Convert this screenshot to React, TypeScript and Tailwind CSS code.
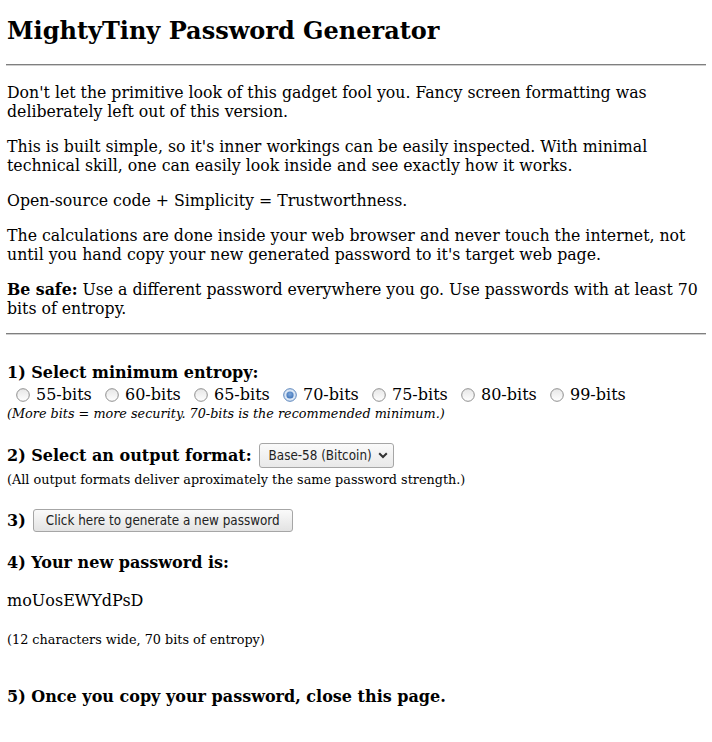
import React, { useState } from "react";

const serif = "font-['DejaVu_Serif',serif]";
const cond = "font-['DejaVu_Serif',serif] font-stretch-semi-condensed";
const sans = "font-['DejaVu_Sans',sans-serif] font-stretch-semi-condensed";

const options = ["55", "60", "65", "70", "75", "80", "99"];

function Radio({ checked }: { checked: boolean }) {
    if (checked) {
        return (
            <svg width="14" height="14" viewBox="0 0 14 14" className="shrink-0">
                <defs>
                    <radialGradient id="dot" cx="50%" cy="40%" r="60%">
                        <stop offset="0%" stopColor="#7fa9dc" />
                        <stop offset="100%" stopColor="#3f73b8" />
                    </radialGradient>
                </defs>
                <circle cx="7" cy="7" r="6.3" fill="#dbe7f5" stroke="#5a84bb" strokeWidth="1" />
                <circle cx="7" cy="7" r="3.6" fill="url(#dot)" />
            </svg>
        );
    }
    return (
        <svg width="14" height="14" viewBox="0 0 14 14" className="shrink-0">
            <defs>
                <linearGradient id="off" x1="0" y1="0" x2="0" y2="1">
                    <stop offset="0%" stopColor="#e6e6e6" />
                    <stop offset="100%" stopColor="#ffffff" />
                </linearGradient>
            </defs>
            <circle cx="7" cy="7" r="6.3" fill="url(#off)" stroke="#8e8e8e" strokeWidth="1" />
        </svg>
    );
}

function Rule() {
    return <div className="-mx-[1px] h-[2px] border-t border-b border-t-[#7f7f7f] border-b-[#cfcfcf]" />;
}

export default function App() {
    const [bits, setBits] = useState("70");

    return (
        <div className={`min-h-screen bg-white text-black px-[7px] pt-[17px] ${serif}`}>
            <h1 className="text-[24px] leading-[28px] font-bold">MightyTiny Password Generator</h1>

            <div className="mt-[19px]">
                <Rule />
            </div>

            <div className={`text-[17.5px] leading-[19px] ${cond}`}>
                <p className="mt-[17px]">
                    Don't let the primitive look of this gadget fool you. Fancy screen formatting was deliberately left
                    out of this version.
                </p>
                <p className="mt-4">
                    This is built simple, so it's inner workings can be easily inspected. With minimal technical skill,
                    one can easily look inside and see exactly how it works.
                </p>
                <p className="mt-4">Open-source code + Simplicity = Trustworthness.</p>
                <p className="mt-4">
                    The calculations are done inside your web browser and never touch the internet, not until you hand
                    copy your new generated password to it's target web page.
                </p>
                <p className="mt-4">
                    <b>Be safe:</b> Use a different password everywhere you go. Use passwords with at least 70 bits of
                    entropy.
                </p>
            </div>

            <div className="mt-[15px]">
                <Rule />
            </div>

            {/* step 1 */}
            <h3 className="mt-[27px] text-[16px] leading-[22px] font-bold">1) Select minimum entropy:</h3>
            <div className="flex h-[22px] items-center pl-[9px] text-[16px]">
                {options.map((o) => (
                    <label key={o} className="flex w-[89px] items-center gap-[6px] cursor-pointer" onClick={() => setBits(o)}>
                        <Radio checked={bits === o} />
                        <span>{o}-bits</span>
                    </label>
                ))}
            </div>
            <div className="text-[12.8px] leading-[16px] italic">
                (More bits = more security. 70-bits is the recommended minimum.)
            </div>

            {/* step 2 */}
            <div className="mt-[21px] flex h-[25px] items-center">
                <h3 className="text-[16px] leading-[22px] font-bold">2) Select an output format:</h3>
                <div
                    className={`ml-[7px] flex h-[25px] w-[135px] items-center justify-between whitespace-nowrap rounded-[3px] border border-[#a6a6a6] bg-gradient-to-b from-[#fafafa] to-[#e9e9e9] pl-[9px] pr-[5px] text-[13.33px] text-[#222] ${sans}`}
                >
                    <span>Base-58 (Bitcoin)</span>
                    <svg width="10" height="7" viewBox="0 0 10 7">
                        <path d="M1.2 1.2 L5 5 L8.8 1.2" fill="none" stroke="#333" strokeWidth="2" />
                    </svg>
                </div>
            </div>
            <div className="mt-[4px] text-[12.8px] leading-[16px]">
                (All output formats deliver aproximately the same password strength.)
            </div>

            {/* step 3 */}
            <div className="mt-[21px] flex h-[23px] items-center">
                <h3 className="text-[16px] leading-[22px] font-bold">3)</h3>
                <button
                    className={`ml-[7px] h-[23px] w-[260px] whitespace-nowrap rounded-[3px] border border-[#a6a6a6] bg-gradient-to-b from-[#fafafa] to-[#e3e3e3] text-[13.33px] text-[#222] ${sans}`}
                >
                    Click here to generate a new password
                </button>
            </div>

            {/* step 4 */}
            <h3 className="mt-[20px] text-[16px] leading-[22px] font-bold">4) Your new password is:</h3>
            <div className="mt-[17px] text-[16px] leading-[19px]">moUosEWYdPsD</div>
            <div className="mt-[22px] text-[12.8px] leading-[16px]">(12 characters wide, 70 bits of entropy)</div>

            {/* step 5 */}
            <h3 className="mt-[38px] text-[16px] leading-[22px] font-bold">
                5) Once you copy your password, close this page.
            </h3>
        </div>
    );
}
